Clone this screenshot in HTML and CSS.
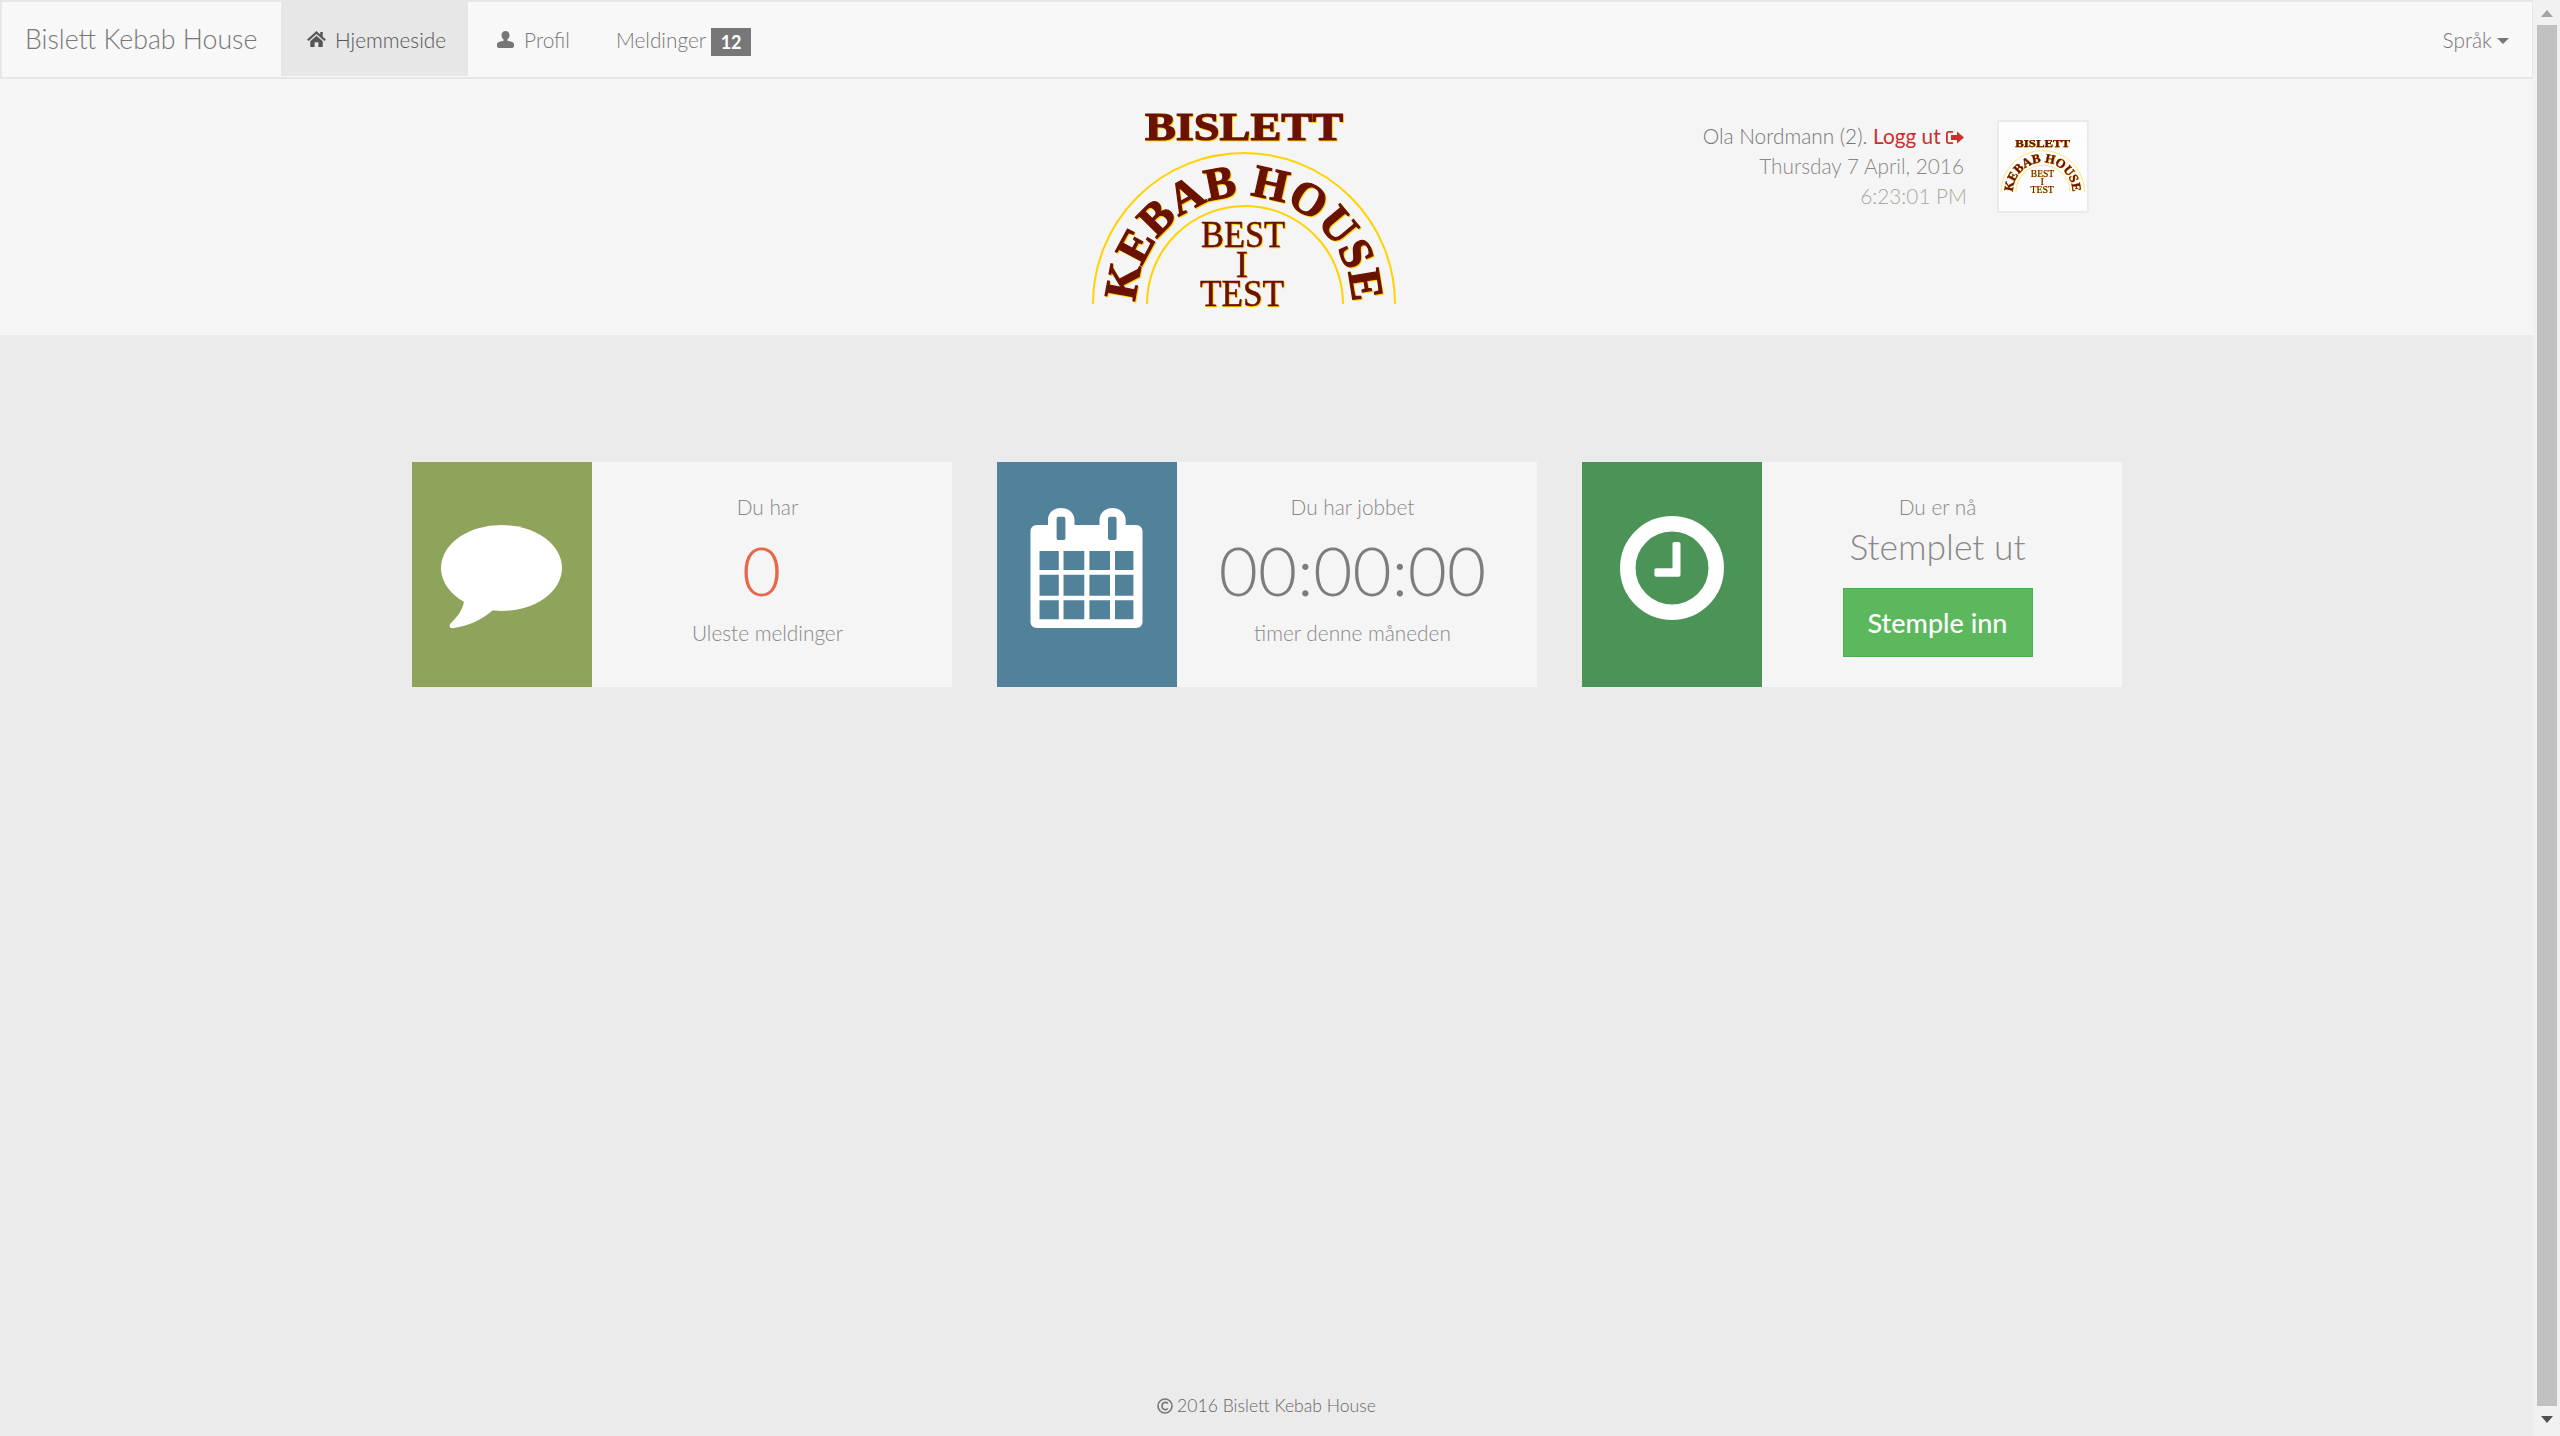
FILE: index.html
```html
<!DOCTYPE html>
<html lang="en">
<head>
  <meta charset="UTF-8">
  <title>Bislett Kebab House</title>
  <link rel="stylesheet" href="styles.css">
</head>
<body>

  <!-- logo is used twice, big in the header and small in the thumbnail -->
  <svg class="defs" width="0" height="0">
    <defs>
      <path id="arcText" d="M76 214 A108 108 0 0 1 292 214"/>
      <g id="logo">
        <path class="logo-arc" d="M33 214 A151 151 0 0 1 335 214"/>
        <path class="logo-arc" d="M87 214 A98 98 0 0 1 283 214"/>
        <text class="logo-text logo-bold" x="184" y="50" font-size="41" textLength="198" lengthAdjust="spacingAndGlyphs">BISLETT</text>
        <text class="logo-text logo-bold" font-size="46"><textPath href="#arcText" startOffset="50%" textLength="335">KEBAB HOUSE</textPath></text>
        <text class="logo-text logo-thin" x="183" y="157" font-size="37" textLength="84" lengthAdjust="spacingAndGlyphs">BEST</text>
        <text class="logo-text logo-thin" x="182" y="187" font-size="37">I</text>
        <text class="logo-text logo-thin" x="182" y="216" font-size="37" textLength="84" lengthAdjust="spacingAndGlyphs">TEST</text>
      </g>
    </defs>
  </svg>

  <div class="app">
    <div class="page">

      <nav class="navbar">
        <a class="brand">Bislett Kebab House</a>
        <a class="nav-item active">
          <svg class="nav-icon home-icon" viewBox="0 0 20 17"><path d="M10 0 0 9l1.6 1.6L10 3.2l8.4 7.4L20 9l-3.4-3V1H14v2.7zM3.4 11 10 5l6.600 6v6H12v-5H8v5H3.4z"/></svg>
          <span>Hjemmeside</span>
        </a>
        <a class="nav-item">
          <svg class="nav-icon user-icon" viewBox="0 0 17 17"><path d="M8.5 0C11 0 12.5 1.900 12.500 4.300c0 1.900-.9 3.500-2.100 4.300v.9c0 .6 6.600 1 6.600 3.500V15c0 1.200-.8 2-2 2H2c-1.200 0-2-.8-2-2v-2c0-2.500 6.600-2.900 6.600-3.500v-.9C5.400 7.800 4.500 6.200 4.500 4.300 4.500 1.900 6 0 8.500 0z"/></svg>
          <span>Profil</span>
        </a>
        <a class="nav-item"><span>Meldinger</span><span class="badge">12</span></a>
        <a class="nav-item lang"><span>Språk</span><span class="caret"></span></a>
      </nav>

      <header class="site-header">
        <svg class="logo-big" viewBox="0 0 360 240"><use href="#logo"/></svg>
        <div class="user-info">
          <div class="line name">Ola Nordmann (2). <a class="logout">Logg ut
            <svg class="logout-icon" viewBox="0 0 18 13"><path d="M7 0v1.800H3c-.8 0-1.200.4-1.200 1.200v7c0 .8.4 1.200 1.200 1.200h4V13H3C1.200 13 0 11.800 0 10V3C0 1.200 1.200 0 3 0zM11 .5 18 6.500l-7 6V9H5V4h6z"/></svg></a></div>
          <div class="line date">Thursday 7 April, 2016</div>
          <div class="time">6:23:01 PM</div>
        </div>
        <div class="thumb">
          <svg class="logo-small" viewBox="30 25 310 195"><use href="#logo"/></svg>
        </div>
      </header>

      <main class="cards">
        <section class="card">
          <div class="card-icon olive">
            <svg viewBox="0 0 180 225">
              <ellipse cx="89.500" cy="106" rx="60.500" ry="43"/>
              <path d="M50 135 52 139C51 148 45 155 39 161 36 164 38 167 42 166 56 164 70 158 81 148L90 140z"/>
            </svg>
          </div>
          <div class="card-body">
            <div class="card-label">Du har</div>
            <div class="card-number red">0</div>
            <div class="card-label">Uleste meldinger</div>
          </div>
        </section>

        <section class="card">
          <div class="card-icon blue">
            <svg viewBox="0 0 180 225">
              <path fill-rule="evenodd" d="M51 63V58C51 51 56 46 64 46 72 46 77.500 51 77.500 58V63H102.500V58C102.500 51 108 46 115.500 46 123 46 128.700 51 128.700 58V63H139C143 63 145.500 66 145.500 69V160C145.500 163 143 166 139 166H40C36 166 33.500 163 33.500 160V69C33.500 66 36 63 40 63zM59.600 57V76C59.600 77.500 60.500 78 61.500 78H66.500C67.500 78 68.400 77.500 68.400 76V57C68.400 55.500 67.500 54.700 66.500 54.700H61.500C60.500 54.700 59.600 55.500 59.600 57zM111 57V76C111 77.500 112 78 113 78H117.500C118.700 78 119.600 77.500 119.600 76V57C119.600 55.500 118.700 54.700 117.500 54.700H113C112 54.700 111 55.500 111 57zM42.500 89V108H61.800V89zM66.500 89V108H87.300V89zM92.400 89V108H113V89zM118 89V108H136.400V89zM42.500 112.700V133.700H61.800V112.700zM66.500 112.700V133.700H87.300V112.700zM92.400 112.700V133.700H113V112.700zM118 112.700V133.700H136.400V112.700zM42.500 138.300V157.300H61.800V138.300zM66.500 138.300V157.300H87.300V138.300zM92.400 138.300V157.300H113V138.300zM118 138.300V157.300H136.400V138.300z"/>
            </svg>
          </div>
          <div class="card-body">
            <div class="card-label">Du har jobbet</div>
            <div class="card-number">00:00:00</div>
            <div class="card-label">timer denne måneden</div>
          </div>
        </section>

        <section class="card">
          <div class="card-icon green">
            <svg viewBox="0 0 180 225">
              <circle class="clock-ring" cx="90" cy="106" r="44.200"/>
              <path d="M92.500 80H96.500C97.800 80 98.500 80.700 98.500 82V112.700C98.500 114 97.800 114.700 96.500 114.700H74.400C73 114.700 72.400 114 72.400 112.700V108.300C72.400 107 73 106.300 74.400 106.300H90.500V82C90.500 80.700 91.200 80 92.500 80z"/>
            </svg>
          </div>
          <div class="card-body">
            <div class="card-label">Du er nå</div>
            <div class="card-status">Stemplet ut</div>
            <button class="btn-stamp">Stemple inn</button>
          </div>
        </section>
      </main>

      <footer class="site-footer">
        <svg class="copy-icon" viewBox="0 0 16 16"><circle cx="8" cy="8" r="7"/><path d="M11 5.500C9 3.500 5 4.300 5 8S9 12.500 11 10.500"/></svg>
        <span>2016 Bislett Kebab House</span>
      </footer>
    </div>

    <div class="scrollbar">
      <span class="arrow-up"></span>
      <div class="thumb-bar"></div>
      <span class="arrow-down"></span>
    </div>
  </div>

</body>
</html>
```

FILE: styles.css
```css
* {
  box-sizing: border-box;
}

body {
  margin: 0;
  font-family: "Lato", sans-serif;
  font-weight: 300;
  color: #777;
  background-color: #ebebeb;
}

.defs {
  position: absolute;
}

.app {
  display: flex;
  height: 1436px;
  overflow: hidden;
}

.page {
  flex: 1;
  display: flex;
  flex-direction: column;
}

/* top menu */
.navbar {
  display: flex;
  height: 79px;
  padding-bottom: 1px;
  background-color: #f8f8f8;
  border: 2px solid #e7e7e7;
  border-right-width: 1px;
}

.brand {
  width: 279px;
  padding-left: 23px;
  font-size: 26.700px;
  line-height: 75px;
}

.nav-item {
  display: flex;
  align-items: center;
  height: 74px;
  padding: 0 23px;
  font-size: 20.800px;
}

.nav-item.active {
  padding-left: 26px;
  padding-right: 22px;
  background-color: #e7e7e7;
  color: #555;
}

.nav-icon {
  fill: currentColor;
  margin-right: 9px;
}

.home-icon {
  width: 19px;
  height: 16px;
}

.user-icon {
  width: 17px;
  height: 17px;
  margin-left: 6px;
  margin-right: 10px;
}

.badge {
  width: 40px;
  height: 28px;
  margin-left: 5px;
  margin-top: 5px;
  background-color: #777;
  color: #fff;
  font-size: 18px;
  font-weight: 700;
  line-height: 28px;
  text-align: center;
}

.lang {
  margin-left: auto;
}

.caret {
  width: 0;
  height: 0;
  margin-left: 5px;
  margin-top: 3px;
  border-top: 6px solid #777;
  border-left: 6px solid transparent;
  border-right: 6px solid transparent;
}

/* logo row */
.site-header {
  display: flex;
  height: 256px;
  padding-left: 1060px;
  padding-right: 444px;
  background-color: #f5f5f5;
}

.logo-big {
  width: 360px;
  height: 240px;
  margin-top: 11px;
  margin-right: auto;
}

.logo-arc {
  fill: none;
  stroke: #ffd200;
  stroke-width: 2;
}

.logo-text {
  fill: #6b1100;
  stroke: #6b1100;
  stroke-width: 1.200;
  font-family: "Liberation Serif", serif;
  text-anchor: middle;
  filter: drop-shadow(1px 1.500px 0 #ffd400);
}

.logo-bold {
  font-weight: 700;
}

.logo-thin {
  stroke-width: 0.500;
}

.user-info {
  margin-top: 42px;
  font-size: 20.800px;
  line-height: 30px;
  text-align: right;
}

.line {
  padding-right: 3px;
}

.name {
  color: #777;
}

.logout {
  color: #c9302c;
  font-weight: 400;
}

.logout-icon {
  width: 18px;
  height: 13px;
  fill: currentColor;
}

.date {
  color: #888;
}

.time {
  color: #a9a89e;
}

.thumb {
  display: flex;
  align-items: center;
  justify-content: center;
  width: 92px;
  height: 93px;
  margin-top: 41px;
  margin-left: 30px;
  background-color: #fdfdff;
  border: 2px solid #ebebeb;
}

.logo-small {
  width: 86px;
  height: 54px;
}

/* three boxes */
.cards {
  display: flex;
  justify-content: center;
  gap: 45px;
  margin-top: 127px;
}

.card {
  display: flex;
  width: 540px;
  height: 225px;
  background-color: #f5f5f5;
}

.card-icon {
  flex: none;
  width: 180px;
  height: 225px;
}

.card-icon svg {
  display: block;
  width: 180px;
  height: 225px;
  fill: #fff;
}

.olive {
  background-color: #8da45a;
}

.blue {
  background-color: #52829a;
}

.green {
  background-color: #4b9356;
}

.clock-ring {
  fill: none;
  stroke: #fff;
  stroke-width: 15.500;
}

.card-body {
  width: 352px;
  padding-top: 30px;
  text-align: center;
}

.card-label {
  font-size: 20.800px;
  line-height: 30px;
  color: #888;
}

.card-number {
  height: 96px;
  font-size: 67.500px;
  line-height: 96px;
  color: #7d7d7d;
}

.red {
  padding-right: 12px;
  color: #e8674a;
}

.card-status {
  font-size: 35.400px;
  line-height: 50px;
  color: #888;
}

.btn-stamp {
  display: block;
  width: 190px;
  height: 69px;
  margin: 16px auto 0;
  background-color: #5cb85c;
  border: 1px solid #4cae4c;
  color: #fff;
  font-family: "Lato", sans-serif;
  font-size: 27px;
  font-weight: 500;
}

.site-footer {
  display: flex;
  align-items: center;
  justify-content: center;
  gap: 4px;
  margin-top: auto;
  padding-bottom: 18px;
  font-size: 17.600px;
  font-weight: 300;
  line-height: 24px;
  color: #666;
}

.copy-icon {
  width: 16px;
  height: 16px;
  fill: none;
  stroke: #777;
  stroke-width: 1.600;
}

/* the browser scrollbar */
.scrollbar {
  flex: none;
  display: flex;
  flex-direction: column;
  align-items: center;
  width: 27px;
  background-color: #f1f1f1;
}

.thumb-bar {
  width: 20px;
  height: 1381px;
  background-color: #c1c1c1;
}

.arrow-up {
  width: 0;
  height: 0;
  margin: 10px 0 8px;
  border-bottom: 7px solid #a3a3a3;
  border-left: 6px solid transparent;
  border-right: 6px solid transparent;
}

.arrow-down {
  width: 0;
  height: 0;
  margin-top: 10px;
  border-top: 7px solid #505050;
  border-left: 6px solid transparent;
  border-right: 6px solid transparent;
}
```
